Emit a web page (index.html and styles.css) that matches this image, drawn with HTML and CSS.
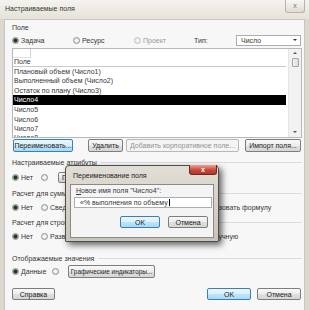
FILE: index.html
```html
<!DOCTYPE html>
<html>
<head>
    <title>Настраиваемые поля</title>
    <link rel="stylesheet" href="styles.css">
</head>
<body>
<div class="window">
    <div class="titlebar">
        <span class="title">Настраиваемые поля</span>
        <span class="close">x</span>
    </div>
    <div class="content">
        <div class="line-label">Поле</div>
        <div class="row type-row">
            <span class="opt w61"><span class="radio checked"></span>Задача</span>
            <span class="opt w61"><span class="radio"></span>Ресурс</span>
            <span class="opt w60 disabled"><span class="radio"></span>Проект</span>
            <span class="type-label">Тип:</span>
            <span class="select">Число<span class="arrow-down"></span></span>
        </div>
        <div class="list">
            <div class="grid">
                <div class="grid-head">
                    <span class="corner"></span>
                    <span class="head-text">Поле</span>
                </div>
                <div class="item">Плановый объем (Число1)</div>
                <div class="item">Выполненный объем (Число2)</div>
                <div class="item">Остаток по плану (Число3)</div>
                <div class="item selected">Число4</div>
                <div class="item">Число5</div>
                <div class="item">Число6</div>
                <div class="item">Число7</div>
                <div class="item">Число8</div>
            </div>
            <div class="scrollbar">
                <span class="arrow-up"></span>
                <span class="thumb"></span>
                <span class="arrow-down small"></span>
            </div>
        </div>
        <div class="row btn-row">
            <span class="btn focus b-rename">Переименовать...</span>
            <span class="btn b-delete">Удалить</span>
            <span class="btn disabled b-add">Добавить корпоративное поле...</span>
            <span class="btn b-import">Импорт поля...</span>
        </div>

        <div class="group g1"><span>Настраиваемые атрибуты</span><span class="group-line"></span></div>
        <div class="row opt-row r1">
            <span class="opt w29"><span class="radio checked"></span>Нет</span>
            <span class="opt w17"><span class="radio"></span></span>
            <span class="btn b-lookup">Подстановка...</span>
            <span class="btn b-formula">Формула...</span>
        </div>

        <div class="group g2"><span>Расчет для суммарных задач</span><span class="group-line"></span></div>
        <div class="row opt-row r2">
            <span class="opt w29"><span class="radio checked"></span>Нет</span>
            <span class="opt w48"><span class="radio"></span>Сведение:</span>
            <span class="select s-rollup">Максимум<span class="arrow-down"></span></span>
            <span class="opt use-formula"><span class="radio"></span>Использовать формулу</span>
        </div>

        <div class="group g3"><span>Расчет для строк назначений</span><span class="group-line"></span></div>
        <div class="row opt-row r3">
            <span class="opt w29"><span class="radio checked"></span>Нет</span>
            <span class="opt"><span class="radio"></span>Развертывание, если значение не было введено вручную</span>
        </div>

        <div class="group g4"><span>Отображаемые значения</span><span class="group-line"></span></div>
        <div class="row opt-row r4">
            <span class="opt w40"><span class="radio checked"></span>Данные</span>
            <span class="opt w16"><span class="radio"></span></span>
            <span class="btn b-graph">Графические индикаторы...</span>
        </div>

        <div class="row bottom-row">
            <span class="btn b-help">Справка</span>
            <span class="spacer"></span>
            <span class="btn focus b-ok">OK</span>
            <span class="btn b-cancel">Отмена</span>
        </div>
    </div>
</div>

<div class="dlg">
    <div class="dlg-title">Переименование поля</div>
    <span class="dlg-close">x</span>
    <div class="dlg-client">
        <div class="dlg-label"><u>Н</u>овое имя поля "Число4":</div>
        <div class="dlg-input">«% выполнения по объему<span class="caret"></span></div>
        <div class="dlg-buttons">
            <span class="btn focus d-ok">OK</span>
            <span class="btn d-cancel">Отмена</span>
        </div>
    </div>
</div>
</body>
</html>
```

FILE: styles.css
```css
body {
    margin: 0;
    width: 309px;
    height: 310px;
    overflow: hidden;
    position: relative;
    background: #dcd8cf;
    font-family: "Liberation Sans", Arial, sans-serif;
    font-size: 7px;
    color: #363636;
}
.window {
    height: 310px;
    display: flex;
    flex-direction: column;
}
.titlebar {
    height: 19px;
    flex: none;
    position: relative;
    display: flex;
    align-items: center;
    background: linear-gradient(#f5f3ef, #e6e2d9);
}
.title {
    margin: -3px 0 0 5px;
}
.close {
    position: absolute;
    right: 4px;
    top: 0;
    width: 20px;
    height: 13px;
    box-sizing: border-box;
    border: 1px solid #b8b4aa;
    border-top: none;
    border-radius: 0 0 3px 3px;
    background: linear-gradient(#f9f7f3, #e0dcd2);
    text-align: center;
    line-height: 11px;
    color: #777;
}
.content {
    flex: 1;
    margin: 0 4px;
    padding: 3px 2px 0 7px;
    background: #f7f7f7;
    border: 1px solid #c8c5bd;
    border-bottom: none;
    display: flex;
    flex-direction: column;
}
.row {
    display: flex;
    align-items: center;
    flex: none;
}
.line-label {
    height: 10px;
    line-height: 10px;
}
.type-row {
    margin-top: 1px;
    height: 12px;
}
.opt {
    display: inline-flex;
    align-items: center;
    white-space: nowrap;
    flex: none;
}
.opt.disabled {
    color: #9a9a9a;
}
.opt.disabled .radio {
    border-color: #c4c4c4;
}
.w16 { width: 16px; }
.w17 { width: 17px; }
.w29 { width: 29px; }
.w40 { width: 40px; }
.w48 { width: 48px; }
.w60 { width: 60px; }
.w61 { width: 61px; }
.radio {
    width: 7px;
    height: 7px;
    box-sizing: border-box;
    border: 1px solid #8e8f8f;
    border-radius: 50%;
    background: radial-gradient(#ffffff, #d8d8d8);
    margin-right: 2px;
    flex: none;
}
.radio.checked {
    background: radial-gradient(circle, #203828 0, #203828 1.4px, #7f9a86 2.2px, #e8ede8 3px);
}
.type-label {
    width: 42px;
    flex: none;
}
.select {
    width: 65px;
    height: 11px;
    flex: none;
    box-sizing: border-box;
    border: 1px solid #abadb3;
    background: #fff;
    display: flex;
    align-items: center;
    justify-content: space-between;
    padding: 0 3px 0 4px;
}
.arrow-down {
    width: 0;
    height: 0;
    border-left: 2px solid transparent;
    border-right: 2px solid transparent;
    border-top: 2px solid #333;
}
.arrow-up {
    width: 0;
    height: 0;
    border-left: 2px solid transparent;
    border-right: 2px solid transparent;
    border-bottom: 2px solid #555;
    margin-top: 3px;
}

/* field list */
.list {
    margin-top: 2px;
    height: 90px;
    flex: none;
    display: flex;
    background: #fff;
    border: 1px solid #b5b8bd;
    box-sizing: border-box;
    overflow: hidden;
}
.grid {
    flex: 1;
}
.grid-head {
    height: 18px;
    box-sizing: border-box;
    border-bottom: 1px solid #c9c9c9;
    position: relative;
}
.corner {
    position: absolute;
    left: 0;
    top: 0;
    width: 17px;
    height: 8px;
    border-right: 1px solid #d2d2d2;
    border-bottom: 1px solid #e2e2e2;
}
.head-text {
    position: absolute;
    left: 1px;
    bottom: 1px;
}
.item {
    height: 9.3px;
    line-height: 9.3px;
    padding-left: 1px;
    white-space: nowrap;
}
.item.selected {
    background: #000;
    color: #fff;
    height: 10.5px;
    line-height: 10.5px;
}
.scrollbar {
    width: 12px;
    margin-left: 2px;
    background: #f2f2f2;
    border-left: 1px solid #e4e4e4;
    display: flex;
    flex-direction: column;
    align-items: center;
}
.thumb {
    margin-top: 4px;
    width: 7px;
    height: 9px;
    box-sizing: border-box;
    border: 1px solid #a3a3a3;
    border-radius: 1px;
    background: linear-gradient(90deg, #f4f4f4, #dedede);
}
.arrow-down.small {
    margin-top: auto;
    margin-bottom: 4px;
    border-top-color: #555;
}

/* buttons */
.btn {
    height: 13px;
    box-sizing: border-box;
    border: 1px solid #7d7d7d;
    border-radius: 2px;
    background: linear-gradient(#f9f9f9 0%, #ececec 50%, #e0e0e0 51%, #d6d6d6 100%);
    display: inline-flex;
    align-items: center;
    justify-content: center;
    white-space: nowrap;
    overflow: hidden;
    flex: none;
    color: #222;
}
.btn.focus {
    border-color: #3c7fb1;
    background: linear-gradient(#eaf6fd 0%, #d9f0fc 50%, #bee6fd 51%, #a7d9f5 100%);
}
.btn.disabled {
    border-color: #b5b9bc;
    background: #f4f4f4;
    color: #929292;
}
.btn-row {
    margin-top: 1px;
    height: 13px;
}
.b-rename { margin-left: 1px; width: 60px; }
.b-delete { margin-left: 15px; width: 35px; }
.b-add { margin-left: 3px; width: 113px; }
.b-import { margin-left: 6px; width: 56px; }

/* groups */
.group {
    height: 10px;
    flex: none;
    display: flex;
    align-items: center;
    white-space: nowrap;
}
.group-line {
    flex: 1;
    height: 1px;
    margin-left: 4px;
    background: #dcdcdc;
}
.g1 { margin-top: 5px; }
.g2 { margin-top: 5px; }
.g3 { margin-top: 4px; }
.g4 { margin-top: 11px; }
.opt-row {
    height: 12px;
}
.r1 { margin-top: 4px; }
.r2 { margin-top: 3px; }
.r3 { margin-top: 3px; }
.r4 { margin-top: 2px; height: 13px; }
.b-lookup { width: 56px; height: 11px; }
.b-formula { width: 44px; height: 11px; margin-left: 4px; }
.s-rollup { width: 50px; }
.use-formula { margin-left: 47px; }
.b-graph {
    width: 87px;
    font-size: 6.4px;
}

.bottom-row {
    margin-top: 10px;
    height: 12px;
}
.spacer { flex: 1; }
.b-help { width: 43px; height: 12px; }
.b-ok { width: 44px; height: 12px; }
.b-cancel { width: 44px; height: 12px; margin: 0 1px 0 6px; }

/* rename dialog */
.dlg {
    position: absolute;
    left: 65px;
    top: 165px;
    width: 154px;
    height: 77px;
    box-sizing: border-box;
    border: 1px solid #4f4d48;
    border-radius: 4px 4px 1px 1px;
    background: linear-gradient(#e2ded5, #c9c4b9);
    box-shadow: 3px 3px 6px rgba(0, 0, 0, 0.6);
}
.dlg-title {
    height: 18px;
    line-height: 20px;
    padding-left: 7px;
    color: #222;
}
.dlg-close {
    position: absolute;
    right: 1px;
    top: -1px;
    width: 28px;
    height: 10px;
    box-sizing: border-box;
    border: 1px solid #6b2a22;
    border-top: none;
    border-radius: 0 0 3px 3px;
    background: linear-gradient(#eaa597, #c7483a 55%, #b5352a);
    color: #fff;
    font-weight: bold;
    text-align: center;
    line-height: 9px;
}
.dlg-client {
    margin: 0 4px;
    height: 54px;
    box-sizing: border-box;
    border: 1px solid #8c8a85;
    background: #f4f4f4;
    padding: 1px 0 0 3px;
}
.dlg-label {
    height: 10px;
    line-height: 10px;
    padding-left: 2px;
}
.dlg-input {
    margin-top: 1px;
    width: 138px;
    height: 11px;
    box-sizing: border-box;
    border: 1px solid #abadb3;
    background: #fff;
    padding-left: 5px;
    line-height: 9px;
    white-space: nowrap;
    display: flex;
    align-items: center;
}
.caret {
    width: 1px;
    height: 7px;
    background: #000;
    margin-left: 1px;
}
.dlg-buttons {
    margin-top: 8px;
    display: flex;
}
.d-ok { width: 40px; height: 12px; margin-left: 46px; }
.d-cancel { width: 40px; height: 12px; margin-left: 8px; }
```
